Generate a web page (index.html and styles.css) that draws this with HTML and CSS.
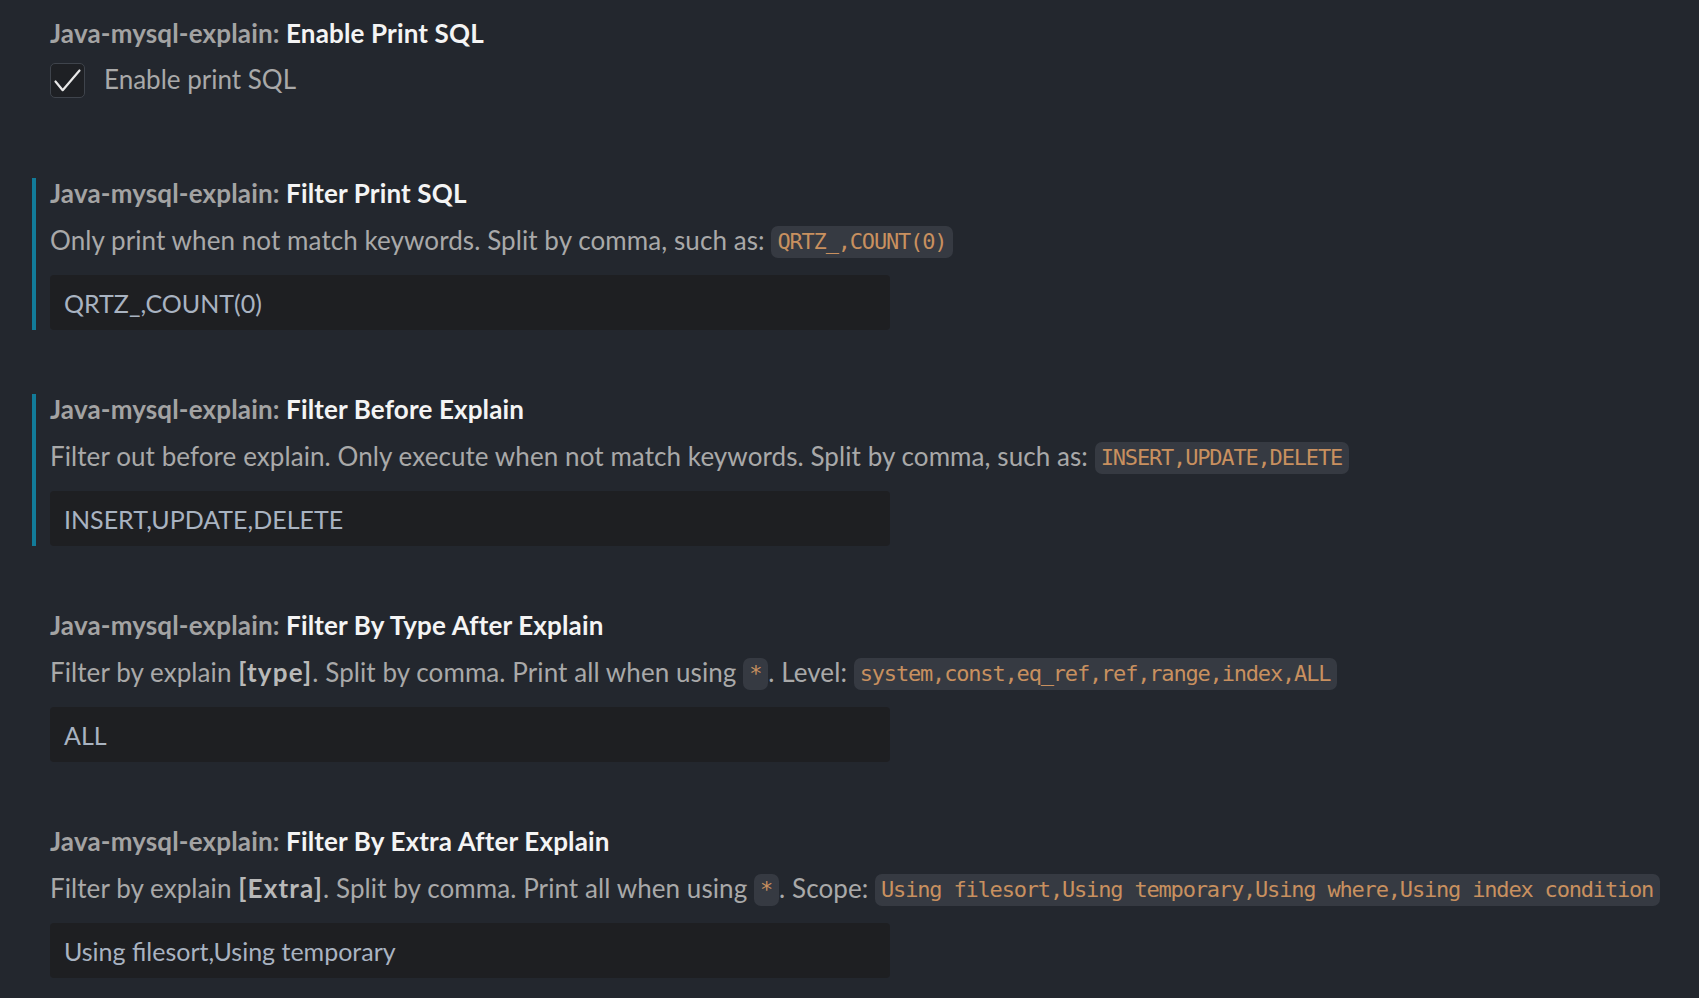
FILE: index.html
```html
<!DOCTYPE html>
<html lang="en">
<head>
<meta charset="utf-8">
<title>Settings</title>
<link rel="stylesheet" href="styles.css">
</head>
<body>
<div class="settings">
  <div class="item item-bool">
    <div class="title"><span class="cat">Java-mysql-explain: </span><span class="name">Enable Print SQL</span></div>
    <label class="check-row">
      <span class="checkbox"><svg width="35" height="35" viewBox="0 0 35 35"><path d="M5.5 18.5 L12.7 27.2 L29.5 7.5" fill="none" stroke="#e8e8e8" stroke-width="2.2" stroke-linecap="round" stroke-linejoin="round"/></svg></span>
      <span class="check-label">Enable print SQL</span>
    </label>
  </div>

  <div class="item focused">
    <div class="title"><span class="cat">Java-mysql-explain: </span><span class="name">Filter Print SQL</span></div>
    <div class="desc">Only print when not match keywords. Split by comma, such as: <code>QRTZ_,COUNT(0)</code></div>
    <div class="input">QRTZ_,COUNT(0)</div>
  </div>

  <div class="item focused">
    <div class="title"><span class="cat">Java-mysql-explain: </span><span class="name">Filter Before Explain</span></div>
    <div class="desc">Filter out before explain. Only execute when not match keywords. Split by comma, such as: <code>INSERT,UPDATE,DELETE</code></div>
    <div class="input">INSERT,UPDATE,DELETE</div>
  </div>

  <div class="item">
    <div class="title"><span class="cat">Java-mysql-explain: </span><span class="name">Filter By Type After Explain</span></div>
    <div class="desc">Filter by explain <b>[type]</b>. Split by comma. Print all when using <code>*</code>. Level: <code>system,const,eq_ref,ref,range,index,ALL</code></div>
    <div class="input">ALL</div>
  </div>

  <div class="item">
    <div class="title"><span class="cat">Java-mysql-explain: </span><span class="name">Filter By Extra After Explain</span></div>
    <div class="desc">Filter by explain <b>[Extra]</b>. Split by comma. Print all when using <code>*</code>. Scope: <code>Using filesort,Using temporary,Using where,Using index condition</code></div>
    <div class="input">Using filesort,Using temporary</div>
  </div>
</div>
</body>
</html>
```

FILE: styles.css
```css
html, body {
  margin: 0;
  padding: 0;
  background: #23272e;
  height: 100%;
  overflow: hidden;
}

body {
  font-family: "Lato", "Liberation Sans", sans-serif;
  font-size: 26px;
  color: #a9a9a9;
}

.settings {
  padding: 18px 0 0 32px;
  display: flex;
  flex-direction: column;
  gap: 64px;
}

.item {
  border-left: 4px solid transparent;
  padding-left: 14px;
  display: flex;
  flex-direction: column;
}

.item.focused {
  border-left-color: #127b99;
}

.item-bool {
  margin-bottom: 16px;
}

.title {
  line-height: 30px;
  height: 30px;
  font-weight: 700;
  letter-spacing: 0.15px;
  white-space: nowrap;
}

.title .cat {
  color: #a3a3a3;
}

.title .name {
  color: #f4f4f4;
}

.check-row {
  display: flex;
  align-items: center;
  gap: 19px;
  margin-top: 15px;
}

.checkbox {
  width: 33px;
  height: 33px;
  border: 1px solid #3f444c;
  border-radius: 5px;
  background: #1e2024;
  display: flex;
  align-items: center;
  justify-content: center;
}

.checkbox svg {
  display: block;
  flex: none;
}

.check-label {
  color: #a9a9a9;
  line-height: 30px;
  margin-top: -3px;
}

.desc {
  margin-top: 17px;
  line-height: 30px;
  height: 30px;
  white-space: nowrap;
  letter-spacing: 0.08px;
  color: #a9a9a9;
}

.desc b {
  font-weight: 700;
  letter-spacing: 1.2px;
  color: #b9b9b9;
}

code {
  font-family: "DejaVu Sans Mono", "Liberation Mono", monospace;
  font-size: 22px;
  letter-spacing: -1.18px;
  color: #c8905f;
  background: #363a42;
  border-radius: 7px;
  padding: 3px 7px 4px 6px;
  vertical-align: 1px;
}

.input {
  margin-top: 20px;
  width: 840px;
  height: 55px;
  box-sizing: border-box;
  background: #1e1f22;
  border-radius: 4px;
  padding: 2px 0 0 14px;
  font-size: 25px;
  line-height: 52px;
  color: #a9b3c1;
  white-space: nowrap;
}
```
